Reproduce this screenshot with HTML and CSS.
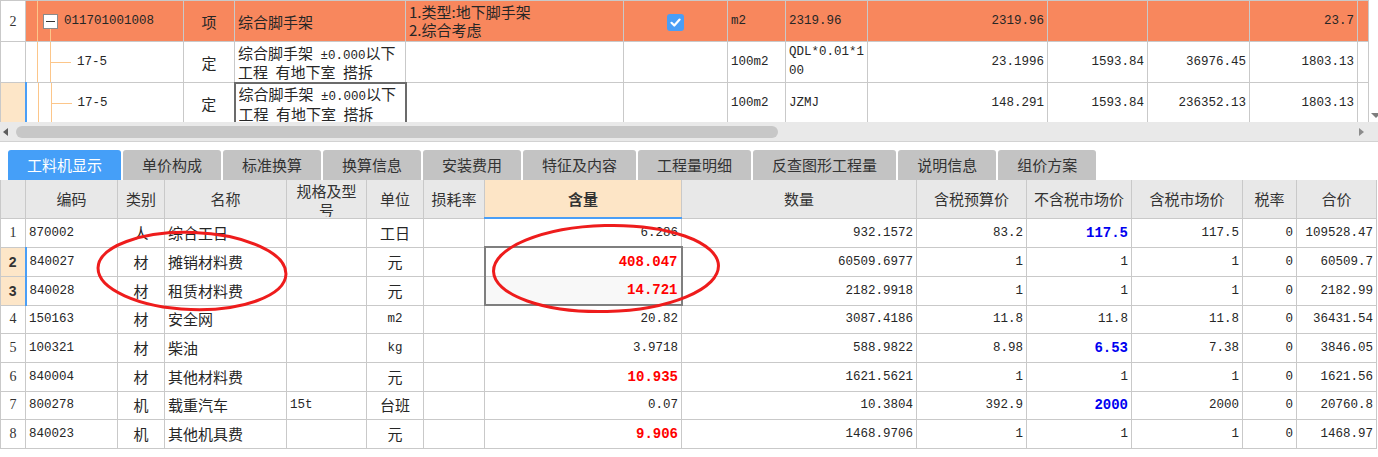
FILE: index.html
```html
<!DOCTYPE html>
<html lang="zh-CN">
<head>
<meta charset="utf-8">
<title>工料机显示</title>
<link rel="stylesheet" href="styles.css">
</head>
<body>
<div class="app">
  <div class="top">
    <table class="tt">
      <colgroup>
        <col class="t1"><col class="t2"><col class="t3"><col class="t4"><col class="t5"><col class="t6"><col class="t7"><col class="t8"><col class="t9"><col class="t10"><col class="t11"><col class="t12"><col class="t13">
      </colgroup>
      <tr class="cur">
        <td class="num white">2</td>
        <td class="code"><div class="tree"><svg width="38" height="40" viewBox="0 0 38 40"><line x1="11.5" y1="0" x2="11.5" y2="40" stroke="#fcc68a"/><line x1="24.5" y1="27" x2="24.5" y2="40" stroke="#fcc68a"/><rect x="17.5" y="13.5" width="14" height="14" fill="#fff" stroke="#8a8a8a"/><line x1="20" y1="20.5" x2="29" y2="20.5" stroke="#333"/></svg><span class="m">011701001008</span></div></td>
        <td class="c">项</td>
        <td>综合脚手架</td>
        <td class="desc"><div class="dbox">1.类型:地下脚手架<br>2.综合考虑</div></td>
        <td class="c"><span class="chk"><svg width="17" height="17" viewBox="0 0 17 17"><path d="M4.5 8.8 L7.3 11.5 L12.6 5.6" fill="none" stroke="#fff" stroke-width="2.2" stroke-linecap="round" stroke-linejoin="round"/></svg></span></td>
        <td class="m">m2</td>
        <td class="m">2319.96</td>
        <td class="m r">2319.96</td>
        <td></td>
        <td></td>
        <td class="m r">23.7</td>
        <td></td>
      </tr>
      <tr>
        <td class="num"></td>
        <td class="code"><div class="tree"><svg width="51" height="40" viewBox="0 0 51 40"><line x1="11.5" y1="0" x2="11.5" y2="40" stroke="#fcc68a"/><line x1="24.5" y1="0" x2="24.5" y2="40" stroke="#fcc68a"/><line x1="24" y1="20.5" x2="45" y2="20.5" stroke="#fcc68a"/></svg><span class="m">17-5</span></div></td>
        <td class="c">定</td>
        <td class="name"><div class="box2">综合脚手架<span class="m"> ±0.000</span>以下<br>工程<span class="m"> </span>有地下室<span class="m"> </span>搭拆</div></td>
        <td></td>
        <td></td>
        <td class="m">100m2</td>
        <td class="m"><div class="box2">QDL*0.01*1<br>00</div></td>
        <td class="m r">23.1996</td>
        <td class="m r">1593.84</td>
        <td class="m r">36976.45</td>
        <td class="m r">1803.13</td>
        <td></td>
      </tr>
      <tr>
        <td class="num selrow"></td>
        <td class="code"><div class="tree"><svg width="51" height="40" viewBox="0 0 51 40"><line x1="11.5" y1="0" x2="11.5" y2="40" stroke="#fcc68a"/><line x1="24.5" y1="0" x2="24.5" y2="40" stroke="#fcc68a"/><line x1="24" y1="20.5" x2="45" y2="20.5" stroke="#fcc68a"/></svg><span class="m">17-5</span></div></td>
        <td class="c">定</td>
        <td class="name focus"><div class="box2">综合脚手架<span class="m"> ±0.000</span>以下<br>工程<span class="m"> </span>有地下室<span class="m"> </span>搭拆</div></td>
        <td></td>
        <td></td>
        <td class="m">100m2</td>
        <td class="m">JZMJ</td>
        <td class="m r">148.291</td>
        <td class="m r">1593.84</td>
        <td class="m r">236352.13</td>
        <td class="m r">1803.13</td>
        <td></td>
      </tr>
    </table>
    <div class="vscroll"><span class="arrow-down"></span></div>
  </div>

  <div class="hscroll">
    <span class="arrow-left"></span>
    <span class="thumb"></span>
    <span class="spacer"></span>
    <span class="arrow-right"></span>
  </div>

  <div class="tabs">
    <span class="tab active">工料机显示</span>
    <span class="tab">单价构成</span>
    <span class="tab">标准换算</span>
    <span class="tab">换算信息</span>
    <span class="tab">安装费用</span>
    <span class="tab">特征及内容</span>
    <span class="tab">工程量明细</span>
    <span class="tab">反查图形工程量</span>
    <span class="tab">说明信息</span>
    <span class="tab">组价方案</span>
  </div>

  <table class="bt">
    <colgroup>
      <col class="b1"><col class="b2"><col class="b3"><col class="b4"><col class="b5"><col class="b6"><col class="b7"><col class="b8"><col class="b9"><col class="b10"><col class="b11"><col class="b12"><col class="b13"><col class="b14">
    </colgroup>
    <tr class="head">
      <th></th>
      <th>编码</th>
      <th>类别</th>
      <th>名称</th>
      <th class="wrap"><div>规格及型<br>号</div></th>
      <th>单位</th>
      <th>损耗率</th>
      <th class="hl">含量</th>
      <th>数量</th>
      <th>含税预算价</th>
      <th>不含税市场价</th>
      <th>含税市场价</th>
      <th>税率</th>
      <th>合价</th>
    </tr>
    <tr>
      <td class="num">1</td><td class="m">870002</td><td class="c">人</td><td>综合工日</td><td></td><td class="c">工日</td><td></td>
      <td class="m r">6.286</td><td class="m r">932.1572</td><td class="m r">83.2</td><td class="m r blue">117.5</td><td class="m r">117.5</td><td class="m r">0</td><td class="m r">109528.47</td>
    </tr>
    <tr>
      <td class="num selrow">2</td><td class="m">840027</td><td class="c">材</td><td>摊销材料费</td><td></td><td class="c">元</td><td></td>
      <td class="m r red sel-a">408.047</td><td class="m r">60509.6977</td><td class="m r">1</td><td class="m r">1</td><td class="m r">1</td><td class="m r">0</td><td class="m r">60509.7</td>
    </tr>
    <tr>
      <td class="num selrow">3</td><td class="m">840028</td><td class="c">材</td><td>租赁材料费</td><td></td><td class="c">元</td><td></td>
      <td class="m r red sel-b">14.721</td><td class="m r">2182.9918</td><td class="m r">1</td><td class="m r">1</td><td class="m r">1</td><td class="m r">0</td><td class="m r">2182.99</td>
    </tr>
    <tr class="short">
      <td class="num">4</td><td class="m">150163</td><td class="c">材</td><td>安全网</td><td></td><td class="c m">m2</td><td></td>
      <td class="m r">20.82</td><td class="m r">3087.4186</td><td class="m r">11.8</td><td class="m r">11.8</td><td class="m r">11.8</td><td class="m r">0</td><td class="m r">36431.54</td>
    </tr>
    <tr>
      <td class="num">5</td><td class="m">100321</td><td class="c">材</td><td>柴油</td><td></td><td class="c m">kg</td><td></td>
      <td class="m r">3.9718</td><td class="m r">588.9822</td><td class="m r">8.98</td><td class="m r blue">6.53</td><td class="m r">7.38</td><td class="m r">0</td><td class="m r">3846.05</td>
    </tr>
    <tr>
      <td class="num">6</td><td class="m">840004</td><td class="c">材</td><td>其他材料费</td><td></td><td class="c">元</td><td></td>
      <td class="m r red">10.935</td><td class="m r">1621.5621</td><td class="m r">1</td><td class="m r">1</td><td class="m r">1</td><td class="m r">0</td><td class="m r">1621.56</td>
    </tr>
    <tr class="short">
      <td class="num">7</td><td class="m">800278</td><td class="c">机</td><td>载重汽车</td><td class="m">15t</td><td class="c">台班</td><td></td>
      <td class="m r">0.07</td><td class="m r">10.3804</td><td class="m r">392.9</td><td class="m r blue">2000</td><td class="m r">2000</td><td class="m r">0</td><td class="m r">20760.8</td>
    </tr>
    <tr>
      <td class="num">8</td><td class="m">840023</td><td class="c">机</td><td>其他机具费</td><td></td><td class="c">元</td><td></td>
      <td class="m r red">9.906</td><td class="m r">1468.9706</td><td class="m r">1</td><td class="m r">1</td><td class="m r">1</td><td class="m r">0</td><td class="m r">1468.97</td>
    </tr>
  </table>

  <svg class="marks" width="1378" height="457" viewBox="0 0 1378 457">
    <ellipse cx="192" cy="271" rx="94" ry="38.5" fill="none" stroke="#ee1c1c" stroke-width="3" transform="rotate(2 192 271)"/>
    <ellipse cx="606" cy="268.5" rx="112.5" ry="43" fill="none" stroke="#ee1c1c" stroke-width="3" transform="rotate(-1.5 606 268.5)"/>
  </svg>
</div>
</body>
</html>
```

FILE: styles.css
```css
* { box-sizing: border-box; }

html, body {
  margin: 0;
  padding: 0;
  background: #fff;
}

body {
  width: 1378px;
  height: 457px;
  overflow: hidden;
  font-family: "Noto Sans CJK SC", "Microsoft YaHei", sans-serif;
  font-size: 15px;
  color: #262626;
}

.app {
  position: relative;
  width: 1378px;
  height: 457px;
}

/* ---------- top table ---------- */
.top {
  display: flex;
  height: 122px;
  overflow: hidden;
}

.tt {
  table-layout: fixed;
  border-collapse: collapse;
  width: 1368px;
  flex: none;
}

.t1 { width: 25px; }
.t2 { width: 158px; }
.t3 { width: 51px; }
.t4 { width: 171px; }
.t5 { width: 218px; }
.t6 { width: 104px; }
.t7 { width: 58px; }
.t8 { width: 82px; }
.t9 { width: 180px; }
.t10 { width: 100px; }
.t11 { width: 102px; }
.t12 { width: 108px; }
.t13 { width: 11px; }

.tt td {
  border: 1px solid #c9c9c9;
  height: 41px;
  padding: 0 3px;
  white-space: nowrap;
  overflow: hidden;
  vertical-align: middle;
  line-height: 19px;
}

.tt tr.cur td { background: #f8875d; }
.tt tr.cur td.white { background: #fff; }

.tt td.code { padding: 0; }
.tree {
  display: flex;
  align-items: center;
  height: 40px;
}
.tree svg { flex: none; display: block; }

.box2 {
  height: 38px;
  overflow: hidden;
  line-height: 19px;
}
.box2 .m { line-height: 1; }

.tt td.desc { vertical-align: top; }
.dbox {
  padding-top: 2px;
  line-height: 18px;
}
.tt td.focus { border: 2px solid #6b6b6b; }

.chk {
  display: inline-flex;
  width: 17px;
  height: 17px;
  border-radius: 3px;
  background: #4a9ef6;
  vertical-align: middle;
}
.chk svg { display: block; }

.vscroll {
  flex: 1;
  display: flex;
  align-items: flex-end;
  justify-content: flex-end;
  padding-bottom: 4px;
  background: #fff;
}
.arrow-down {
  width: 0;
  height: 0;
  border-left: 5px solid transparent;
  border-right: 5px solid transparent;
  border-top: 5px solid #7d7d7d;
  margin-right: -3px;
}

/* ---------- common cell types ---------- */
.m {
  font-family: "Liberation Mono", "DejaVu Sans Mono", monospace;
  font-size: 12.5px;
}
.r { text-align: right; }
.c { text-align: center; }

/* ---------- horizontal scrollbar ---------- */
.hscroll {
  display: flex;
  align-items: center;
  height: 20px;
  background: #e9e9e9;
  border-bottom: 1px solid #d2d2d2;
}
.arrow-left {
  width: 0;
  height: 0;
  margin-left: 3px;
  border-top: 4px solid transparent;
  border-bottom: 4px solid transparent;
  border-right: 5px solid #5d5d5d;
}
.thumb {
  margin-left: 8px;
  width: 762px;
  height: 12px;
  border-radius: 6px;
  background: #c7c7c7;
}
.spacer { flex: 1; }
.arrow-right {
  width: 0;
  height: 0;
  margin-right: 14px;
  border-top: 4px solid transparent;
  border-bottom: 4px solid transparent;
  border-left: 5px solid #8c8c8c;
}

/* ---------- tabs ---------- */
.tabs {
  display: flex;
  gap: 2px;
  padding: 8px 0 0 8px;
  height: 38px;
  align-items: flex-end;
}
.tab {
  height: 30px;
  padding: 0 19px;
  background: #c3c3c3;
  border-radius: 3px 3px 0 0;
  line-height: 30px;
  color: #333;
  white-space: nowrap;
}
.tab.active {
  background: #459ff8;
  color: #fff;
}

/* ---------- bottom table ---------- */
.bt {
  table-layout: fixed;
  border-collapse: collapse;
  width: 1376px;
}
.b1 { width: 25px; }
.b2 { width: 92px; }
.b3 { width: 47px; }
.b4 { width: 122px; }
.b5 { width: 80px; }
.b6 { width: 57px; }
.b7 { width: 61px; }
.b8 { width: 197px; }
.b9 { width: 235px; }
.b10 { width: 110px; }
.b11 { width: 105px; }
.b12 { width: 111px; }
.b13 { width: 54px; }
.b14 { width: 80px; }

.bt th {
  height: 38px;
  background: #e8e8e8;
  border: 1px solid #c9c9c9;
  border-top: 0;
  font-weight: normal;
  color: #333;
  padding: 0 2px;
  white-space: nowrap;
  overflow: hidden;
  vertical-align: middle;
}
.bt th.wrap { vertical-align: top; }
.bt th.wrap div {
  height: 37px;
  overflow: hidden;
  line-height: 19px;
  padding-top: 1px;
}
.bt th.hl {
  background: #fde5c6;
  font-weight: bold;
  border-bottom: 2px solid #4a9ef6;
}

.bt td {
  height: 29px;
  border: 1px solid #c9c9c9;
  padding: 0 3px;
  white-space: nowrap;
  overflow: hidden;
  vertical-align: middle;
  line-height: 20px;
}
.bt tr.short td { height: 28px; }

.num {
  text-align: center;
  font-family: "Liberation Serif", "DejaVu Serif", serif;
  font-size: 14px;
  color: #333;
  padding: 0 !important;
}
.selrow {
  background: #fde6c8;
  font-weight: bold;
  font-family: "Liberation Sans", sans-serif;
  border-right: 2px solid #4a9ef6 !important;
}

.red {
  color: #ff0000;
  font-weight: bold;
  font-size: 14px;
}
.blue {
  color: #0000f0;
  font-weight: bold;
  font-size: 14px;
}

.bt td.sel-a {
  border: 2px solid #7f7f7f;
  border-bottom: 1px solid #c9c9c9;
}
.bt td.sel-b {
  border: 2px solid #7f7f7f;
  border-top: 1px solid #c9c9c9;
  background: #f8f8f8;
}

/* ---------- annotation marks ---------- */
.marks {
  position: absolute;
  left: 0;
  top: 0;
  pointer-events: none;
}
```
